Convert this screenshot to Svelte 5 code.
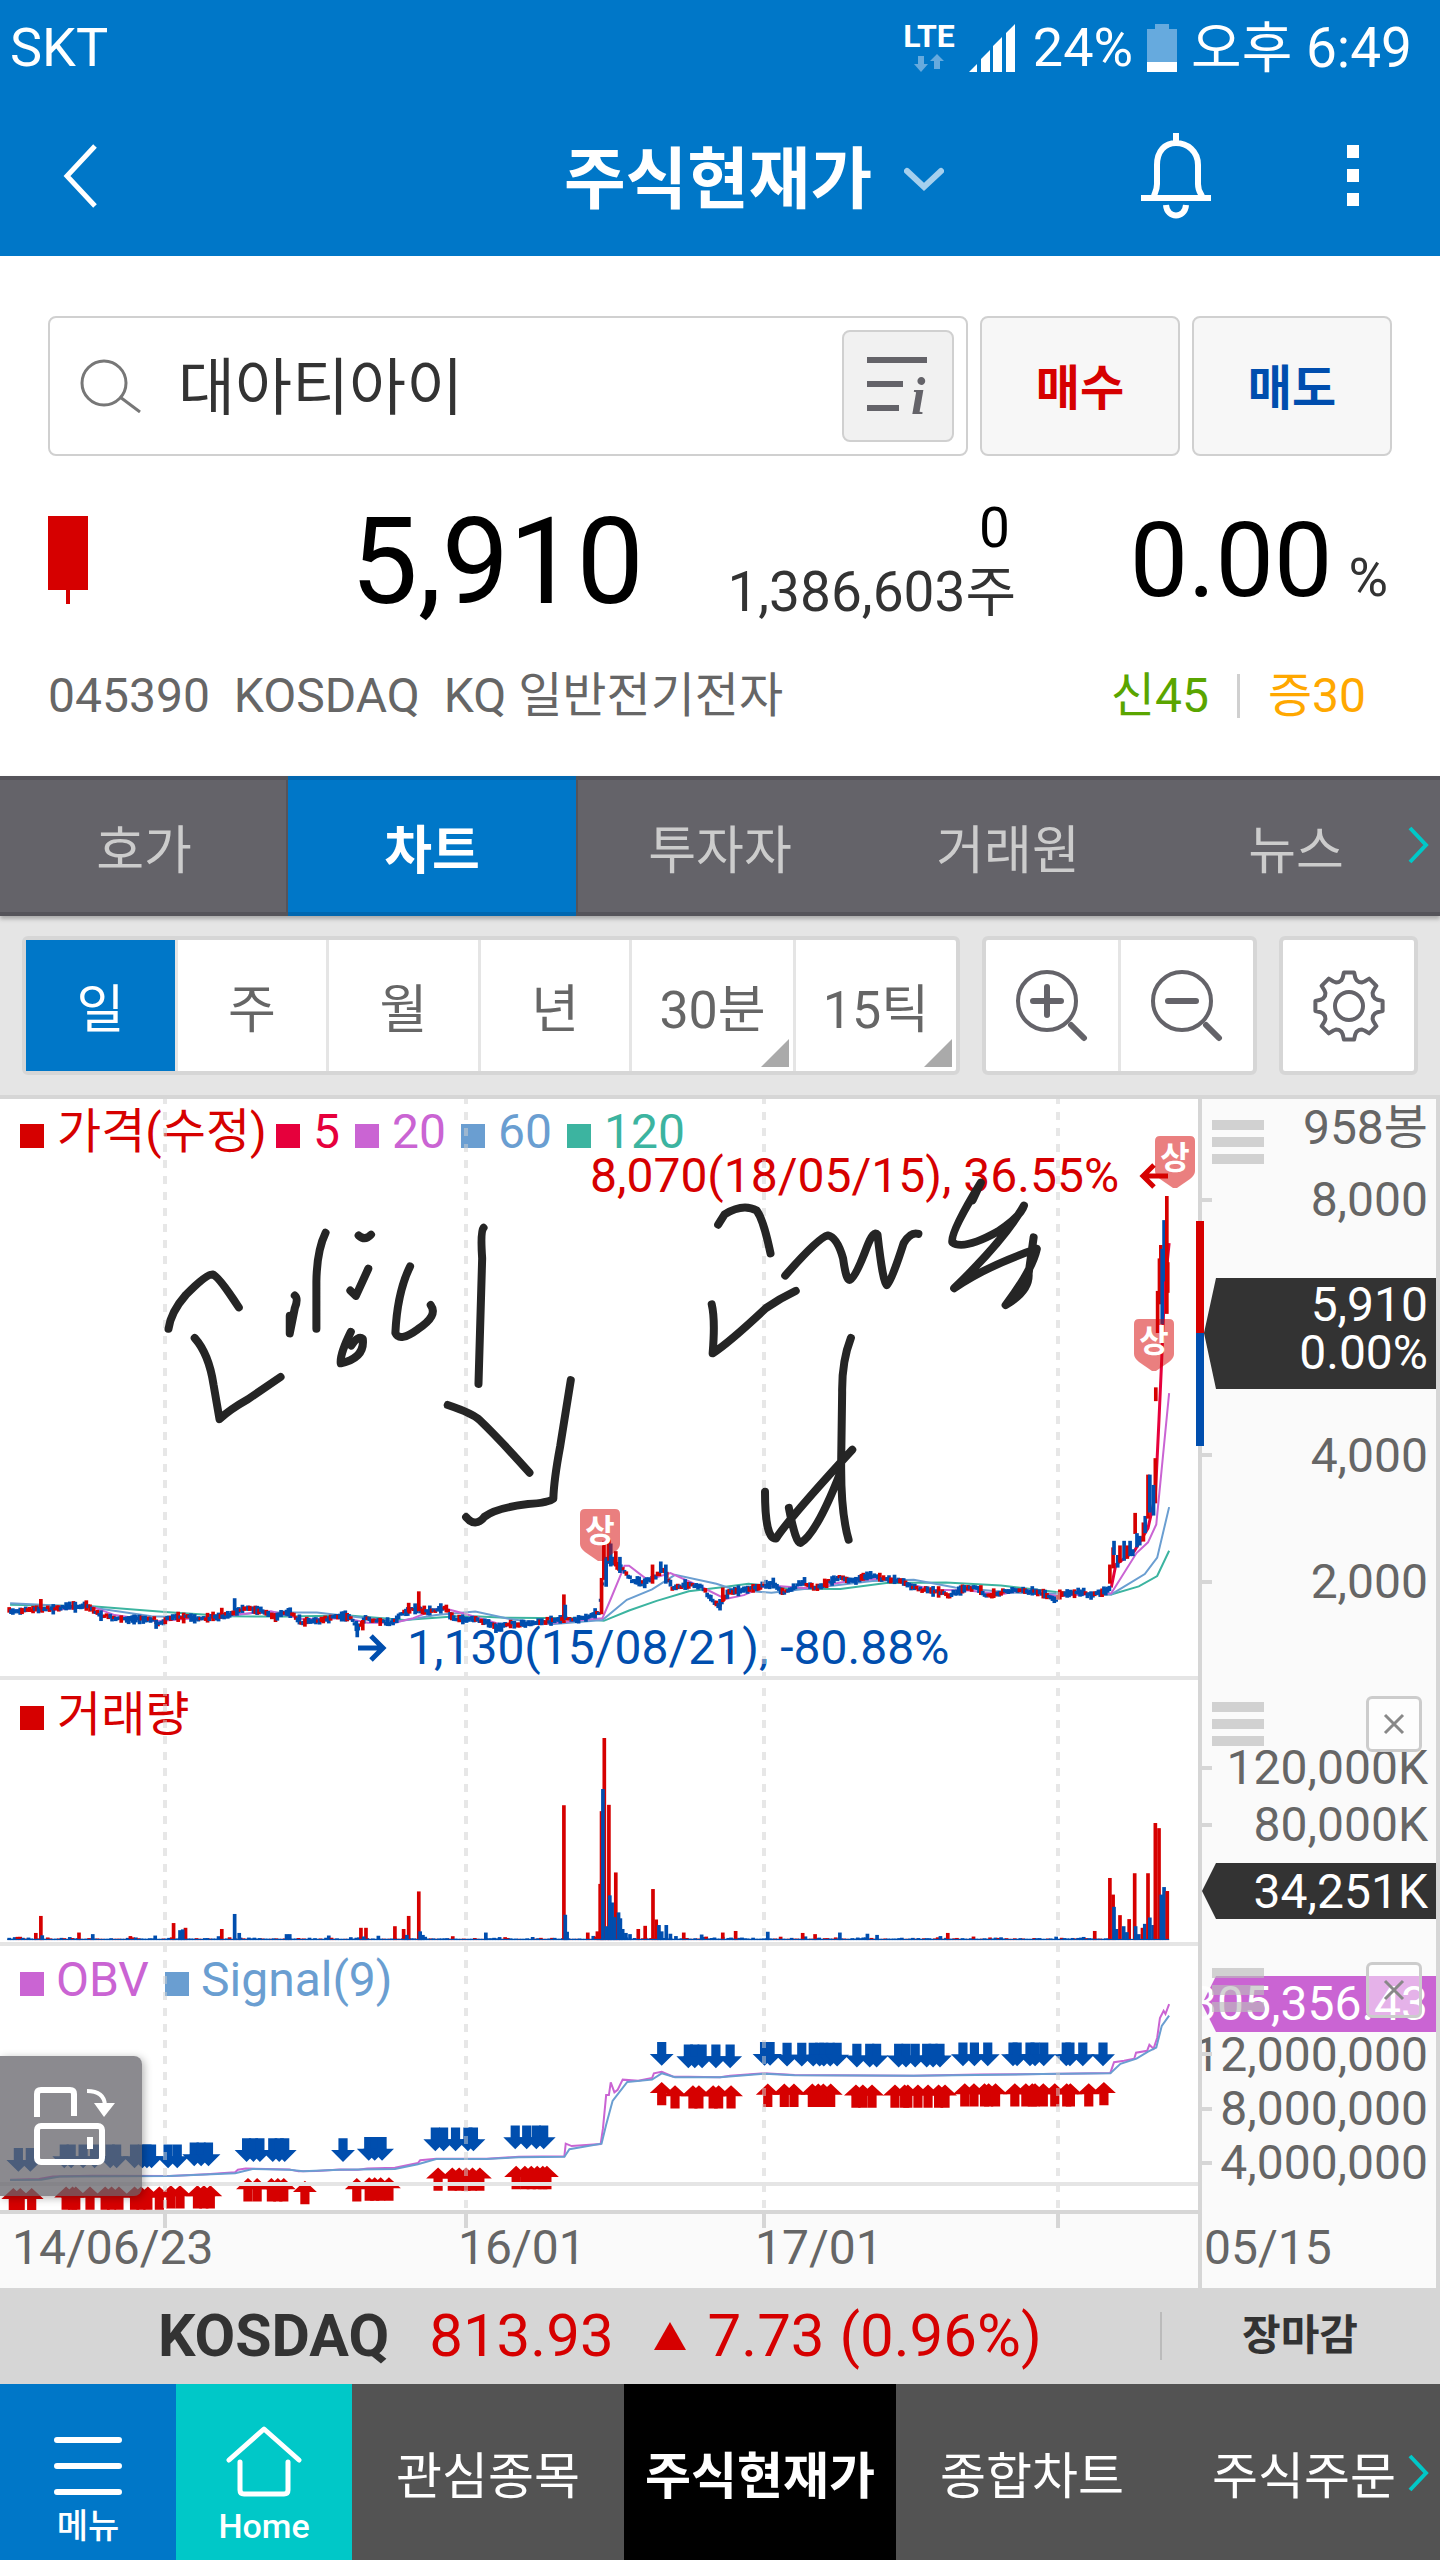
<script lang="ts">
	type Bar = [number, number, number, string];

	const R = '#d60000';
	const B = '#004eae';

	const tabs = ['호가', '차트', '투자자', '거래원', '뉴스'];
	const periods = ['일', '주', '월', '년', '30분', '15틱'];
	const menus = ['관심종목', '주식현재가', '종합차트', '주식주문'];

	let stock = $state('대아티아이');
	let tab = $state('차트');
	let period = $state('일');

	const gridX = [165, 466, 764, 1058];

	const legend = [
		{ x: 20, label: '가격(수정)', color: R },
		{ x: 276, label: '5', color: '#e6003c' },
		{ x: 355, label: '20', color: '#ca64d3' },
		{ x: 461, label: '60', color: '#6a9ed1' },
		{ x: 567, label: '120', color: '#3cb4a0' }
	];

	// daily close trend
	const trend = [
		[20, 1362], [60, 1357], [120, 1354], [190, 1346], [215, 1370], [260, 1382], [335, 1382], [345, 1394], [380, 1374],
		[440, 1382], [500, 1370], [530, 1356], [570, 1360], [600, 1376], [630, 1364], [655, 1390], [700, 1386], [740, 1375],
		[765, 1378], [780, 1408], [795, 1382], [850, 1393], [880, 1365], [905, 1354], [930, 1365], [970, 1352], [985, 1380],
		[1030, 1384], [1060, 1392], [1085, 1406], [1110, 1395], [1160, 1394], [1210, 1384], [1230, 1378], [1255, 1385],
		[1305, 1366], [1312, 1290], [1325, 1225], [1340, 1236], [1360, 1258], [1375, 1280], [1400, 1288], [1430, 1270],
		[1445, 1252], [1465, 1304], [1500, 1292], [1530, 1300], [1545, 1326], [1566, 1346], [1588, 1312], [1628, 1305],
		[1668, 1292], [1688, 1290], [1706, 1316], [1748, 1285], [1778, 1302], [1803, 1286], [1828, 1275], [1858, 1282],
		[1893, 1268], [1918, 1276], [1968, 1285], [1998, 1304], [2048, 1312], [2063, 1322], [2108, 1300], [2133, 1303],
		[2148, 1323], [2208, 1305], [2268, 1315], [2296, 1334], [2313, 1315], [2358, 1312], [2373, 1320], [2416, 1306]
	];

	let seed = 7;
	function rand() {
		seed = (seed * 16807) % 2147483647;
		return seed / 2147483647;
	}

	function at(points: number[][], x: number) {
		const i = Math.max(1, points.findIndex((p) => p[0] >= x));
		const [x0, y0] = points[i - 1];
		const [x1, y1] = points[i];
		return y0 + ((y1 - y0) * (x - x0)) / (x1 - x0);
	}

	const candles: Bar[] = [];
	for (let x = 20; x <= 2416; x += 4) {
		const y = at(trend, x) + (rand() - 0.5) * 7;
		const half = 4 + rand() * rand() * 12;
		candles.push([x, y - half, y + half, rand() > 0.38 ? B : R]);
	}

	const spikes: Bar[] = [
		[89, 1330, 1355, R], [511, 1328, 1360, B], [483, 1353, 1370, R], [912, 1310, 1362, R], [890, 1340, 1365, R],
		[778, 1395, 1430, B], [790, 1385, 1412, R], [340, 1385, 1408, B], [1228, 1318, 1378, R], [1231, 1345, 1380, B],
		[1310, 1275, 1370, R], [1315, 1178, 1280, R], [1320, 1220, 1298, B], [1326, 1175, 1230, R], [1330, 1185, 1245, B],
		[1341, 1205, 1245, R], [1350, 1220, 1262, B], [1421, 1240, 1290, R], [1439, 1232, 1262, B], [1450, 1240, 1290, B],
		[1568, 1330, 1360, B], [1574, 1300, 1338, R], [2417, 1240, 1290, R], [2424, 1195, 1250, R], [2426, 1178, 1215, B],
		[2434, 1215, 1248, B], [2439, 1190, 1235, R], [2448, 1178, 1230, B], [2455, 1190, 1225, R], [2461, 1178, 1218, B],
		[2467, 1200, 1218, B], [2472, 1105, 1160, R], [2476, 1158, 1195, B], [2482, 1165, 1190, B], [2490, 1130, 1180, R],
		[2494, 1113, 1158, B], [2500, 1005, 1120, R], [2504, 1005, 1104, B], [2516, 962, 1080, R], [2512, 1032, 1112, B],
		[2517, 777, 813, R], [2521, 525, 635, R], [2525, 440, 560, R], [2528, 405, 520, R], [2531, 415, 612, B],
		[2535, 340, 500, B], [2541, 277, 585, R], [2543, 450, 530, R]
	];

	const volumes: Bar[] = [];
	for (let x = 20; x < 2420; x += 6) {
		volumes.push([x, 680 - rand() * rand() * rand() * 12, 683, rand() > 0.35 ? B : R]);
	}
	const volumeSpikes: [number, number, string][] = [
		[78, 665, R], [89, 622, R], [92, 671, B], [172, 664, R], [202, 668, B], [378, 640, R], [404, 652, R], [392, 658, B],
		[398, 656, B], [483, 655, R], [511, 617, B], [521, 665, B], [624, 668, B], [631, 668, B], [786, 652, R], [797, 652, R],
		[792, 674, B], [860, 648, R], [879, 655, R], [890, 622, R], [886, 670, B], [912, 560, R], [915, 661, B], [921, 670, B],
		[1058, 664, B], [1228, 342, R], [1231, 619, B], [1235, 662, B], [1280, 664, R], [1301, 661, R], [1307, 541, R],
		[1310, 357, R], [1316, 172, R], [1313, 301, B], [1326, 341, R], [1321, 648, B], [1328, 570, B], [1333, 588, B],
		[1341, 512, R], [1338, 625, B], [1347, 613, B], [1351, 628, B], [1356, 655, B], [1363, 665, B], [1372, 668, B],
		[1390, 655, R], [1405, 647, R], [1422, 554, R], [1429, 631, R], [1435, 645, B], [1441, 661, B], [1451, 645, B],
		[1460, 667, B], [1489, 664, R], [1528, 669, B], [1574, 664, R], [1602, 660, R], [1672, 662, B], [1748, 665, R],
		[1775, 668, R], [1829, 664, B], [1889, 667, B], [1910, 670, B], [2064, 665, R], [2384, 660, R], [2417, 526, R],
		[2424, 568, R], [2426, 599, B], [2432, 655, B], [2439, 620, R], [2447, 648, B], [2459, 630, R], [2454, 663, B],
		[2471, 514, R], [2473, 648, B], [2480, 668, B], [2488, 652, R], [2493, 642, B], [2500, 514, R], [2504, 626, B],
		[2511, 645, B], [2516, 387, R], [2524, 400, R], [2529, 568, B], [2535, 549, B], [2542, 559, R]
	];

	// [top, x positions]
	const sells: [number, number[]][] = [
		[1209, [40, 66]],
		[1200, [140, 155, 181, 206, 240, 254, 293, 310, 320, 330, 366, 386]],
		[1195, [423, 438, 454]],
		[1184, [537, 552, 566, 594, 608, 620, 747]],
		[1181, [803, 816, 832]],
		[1157, [948, 966, 992, 1019, 1031]],
		[1152, [1122, 1147, 1168, 1184]],
		[941, [1441, 1665, 1677]],
		[947, [1499, 1513, 1529, 1559, 1590]],
		[943, [1714, 1746, 1771, 1785, 1794, 1808, 1823]],
		[945, [1866, 1894, 1909, 1957, 1973, 1993, 2018, 2032, 2047]],
		[942, [2097, 2122, 2151, 2206, 2215, 2243, 2254, 2273, 2322, 2330, 2358, 2402]]
	];
	const buys: [number, number[]][] = [
		[1310, [29, 44, 69]],
		[1306, [144, 158, 165, 196, 229, 243, 259, 293, 307, 322, 347]],
		[1303, [372, 392, 430, 444, 458]],
		[1285, [540, 560, 591, 605, 618, 777]],
		[1292, [664]],
		[1283, [804, 816, 829, 847]],
		[1258, [954, 985, 1000, 1015, 1029, 1045]],
		[1254, [1124, 1143, 1157, 1170, 1182, 1191]],
		[1042, [1441, 2404]],
		[1050, [1470, 1509, 1522, 1553, 1565, 1592]],
		[1046, [1672, 1708, 1729, 1769, 1782, 1793, 1809]],
		[1048, [1864, 1879, 1899, 1949, 1970, 1977, 1999, 2021, 2044, 2058]],
		[1045, [2101, 2121, 2144, 2153, 2168, 2210, 2234, 2248, 2254, 2272, 2297, 2323, 2331, 2371]]
	];

	const axis = [
		{ y: 45, label: '958봉' },
		{ y: 117, label: '8,000', tick: 101 },
		{ y: 373, label: '4,000', tick: 356 },
		{ y: 499, label: '2,000', tick: 483 },
		{ y: 685, label: '120,000K', tick: 669 },
		{ y: 742, label: '80,000K', tick: 726 },
		{ y: 972, label: '12,000,000', tick: 955 },
		{ y: 1026, label: '8,000,000', tick: 1010 },
		{ y: 1080, label: '4,000,000', tick: 1064 }
	];
	const dates = [
		{ x: 12, label: '14/06/23' },
		{ x: 458, label: '16/01' },
		{ x: 755, label: '17/01' },
		{ x: 1204, label: '05/15' }
	];
	const limits = [[580, 410], [1155, 37], [1134, 220]];
	const handles = [21, 603, 869];

	// outline of the settings cog, eight teeth
	const cog: string[] = [];
	for (let i = 0; i < 8; i++) {
		for (const [turn, r] of [[-0.28, 27], [-0.22, 29], [-0.15, 34], [0.15, 34], [0.22, 29], [0.28, 27], [0.39, 26]]) {
			const a = (i * Math.PI) / 4 + turn;
			cog.push(`${(37 + r * Math.sin(a)).toFixed(1)},${(37 - r * Math.cos(a)).toFixed(1)}`);
		}
	}
</script>

<header>
	<div class="status">
		<span>SKT</span>
		<div class="signals">
			<span class="lte">
				<b>LTE</b>
				<svg width="30" height="18" viewBox="0 0 30 18"><path fill="#66aade" d="M4 2h6v8h4l-7 8-7-8h4zM20 15h6V7h4l-7-7-7 7h4z" /></svg>
			</span>
			<svg width="50" height="48" viewBox="0 0 50 48"><path fill="#fff" d="M0 48l8-8v8zM12 48V35l9-9v22zM24 48V22l9-9v35zM37 48V9l9-9v48z" /></svg>
			<span>24%</span>
			<svg width="30" height="48" viewBox="0 0 30 48"><path fill="#66aade" d="M8 0h14v5h8v33H0V5h8z" /><path fill="#fff" d="M0 38h30v10H0z" /></svg>
			<span class="clock">오후 6:49</span>
		</div>
	</div>
	<div class="title">
		<button aria-label="뒤로">
			<svg width="40" height="66" viewBox="0 0 40 66"><path d="M35 3 7 33l28 30" fill="none" stroke="#fff" stroke-width="5" /></svg>
		</button>
		<h1>주식현재가
			<svg width="40" height="26" viewBox="0 0 40 26"><path d="m3 4 17 16L37 4" fill="none" stroke="#a6d0ee" stroke-width="6" stroke-linecap="round" /></svg>
		</h1>
		<button class="bell" aria-label="알림">
			<svg width="72" height="86" viewBox="0 0 72 86" fill="none" stroke="#fff" stroke-width="6"><path d="M36 0v9M14 63c0-2 3-5 3-12V32C17 18 25 10 36 10s22 8 22 22v19c0 7 3 10 4 12M26 72c1 14 19 14 20 0" /><path d="M1 65h70" /></svg>
		</button>
		<button class="more" aria-label="더보기">
			<svg width="14" height="62" viewBox="0 0 14 62"><path fill="#fff" d="M1 0h12v13H1zM1 24h12v13H1zM1 48h12v13H1z" /></svg>
		</button>
	</div>
</header>

<section class="quote">
	<div class="search">
		<div class="field">
			<svg width="62" height="54" viewBox="0 0 62 54" fill="none" stroke="#777" stroke-width="3"><circle cx="24" cy="24" r="22" /><path d="m40 38 20 15" /></svg>
			<input type="text" aria-label="종목" bind:value={stock} />
			<button aria-label="종목정보">
				<svg width="66" height="64" viewBox="0 0 66 64"><path stroke="#646369" stroke-width="6" d="M2 6h60M2 30h36M2 54h32" /><text x="46" y="60" font-family="Liberation Serif, serif" font-size="52" font-style="italic" font-weight="bold" fill="#646369">i</text></svg>
			</button>
		</div>
		<button class="trade buy">매수</button>
		<button class="trade sell">매도</button>
	</div>
	<div class="price">
		<svg width="40" height="88" viewBox="0 0 40 88"><path fill="#d60000" d="M0 0h40v74H22v14h-4V74H0z" /></svg>
		<strong>5,910</strong>
		<div class="change"><span>0</span><span class="vol">1,386,603주</span></div>
		<div class="rate">0.00<small>%</small></div>
	</div>
	<div class="info">
		<span>045390</span><span>KOSDAQ</span><span>KQ 일반전기전자</span>
		<span class="credit">신45</span><i></i><span class="margin">증30</span>
	</div>
</section>

<nav class="tabs">
	{#each tabs as t}
		<button class:on={tab === t} onclick={() => (tab = t)}>{t}</button>
	{/each}
	<svg class="next" width="22" height="38" viewBox="0 0 22 38"><path d="m2 2 16 17L2 36" fill="none" stroke="#00c8c8" stroke-width="4" /></svg>
</nav>

<div class="toolbar">
	<div class="group periods">
		{#each periods as p, i}
			<button class:on={period === p} class:drop={i > 3} onclick={() => (period = p)}>{p}</button>
		{/each}
	</div>
	<div class="group zoom">
		<button aria-label="확대">
			<svg width="74" height="74" viewBox="0 0 74 74" fill="none" stroke="#646369" stroke-width="4" stroke-linecap="round"><circle cx="32" cy="32" r="29" /><path stroke-width="6" d="M18 32h28M32 18v28M56 56l13 13" /></svg>
		</button>
		<button aria-label="축소">
			<svg width="74" height="74" viewBox="0 0 74 74" fill="none" stroke="#646369" stroke-width="4" stroke-linecap="round"><circle cx="32" cy="32" r="29" /><path stroke-width="6" d="M18 32h28M56 56l13 13" /></svg>
		</button>
	</div>
	<div class="group gear">
		<button aria-label="설정">
			<svg width="74" height="74" viewBox="0 0 74 74" fill="none" stroke="#646369" stroke-width="4" stroke-linejoin="round"><circle cx="37" cy="37" r="14" /><polygon points={cog.join(' ')} /></svg>
		</button>
	</div>
</div>

<main>
	<svg class="chart" viewBox="0 0 1440 1189">
		<rect x="1198" width="242" height="1189" fill="#fafafa" />
		<rect y="1115" width="1198" height="74" fill="#fafafa" />
		<g font-size="48">
			{#each legend as l}
				<rect x={l.x} y="25" width="24" height="24" fill={l.color} />
				<text x={l.x + 37} y="49" fill={l.color}>{l.label}</text>
			{/each}
			<rect x="20" y="607" width="24" height="24" fill={R} />
			<text x="57" y="632" fill={R}>거래량</text>
			<rect x="20" y="873" width="24" height="24" fill="#ca64d3" />
			<text x="56" y="897" fill="#ca64d3">OBV</text>
			<rect x="165" y="873" width="24" height="24" fill="#6a9ed1" />
			<text x="201" y="897" fill="#6a9ed1">Signal(9)</text>
			<text x="590" y="93" fill={R}>8,070(18/05/15), 36.55%</text>
			<text x="407" y="565" fill={B}>1,130(15/08/21), -80.88%</text>
		</g>

		<path d="M1168 77h-24m10-11-11 11 11 11" fill="none" stroke={R} stroke-width="5" />
		<path d="M358 549h24m-11-12 12 12-12 12" fill="none" stroke={B} stroke-width="5" />

		<!-- price -->
		<g transform="translate(0 -9) scale(.4592 .3827)">
			<g class="line" stroke-width="2">
				<path stroke="#3cb4a0" d="M22 1345L200 1349 360 1364 500 1375 620 1376 760 1373 880 1385 1010 1374 1100 1379 1250 1380 1315 1387 1370 1360 1430 1335 1500 1310 1568 1300 1630 1290 1720 1303 1830 1304 1930 1288 2060 1287 2180 1295 2300 1312 2420 1318 2480 1297 2520 1270 2546 1204" />
				<path stroke="#6a9ed1" d="M22 1341L90 1345 200 1352 330 1375 470 1380 560 1365 690 1365 780 1378 870 1388 950 1372 1035 1363 1110 1382 1200 1396 1312 1385 1365 1332 1420 1305 1470 1267 1560 1290 1600 1306 1680 1314 1780 1300 1900 1283 1990 1280 2080 1300 2200 1313 2300 1316 2420 1318 2493 1265 2520 1222 2546 1090" />
				<path stroke="#ca64d3" d="M22 1360L120 1358 200 1350 250 1372 340 1388 430 1380 520 1370 590 1362 660 1383 750 1380 800 1392 860 1392 900 1380 960 1352 1010 1368 1100 1400 1200 1393 1312 1380 1330 1330 1360 1243 1370 1243 1410 1280 1460 1262 1530 1300 1580 1330 1620 1320 1670 1294 1760 1302 1840 1285 1930 1275 2030 1306 2110 1308 2180 1318 2230 1305 2300 1322 2420 1315 2475 1210 2500 1182 2518 1135 2546 792" />
				<path stroke="#e6003c" stroke-width="3" d="M2420 1300L2430 1240 2470 1205 2500 1145 2516 1060 2524 860 2530 700 2536 520 2546 400" />
			</g>
			{#each [...candles, ...spikes] as [x, top, bottom, fill]}
				<rect x={x - 4} y={top} width="8" height={bottom - top} {fill} />
			{/each}
		</g>

		{#each limits as [x, y]}
			<path transform="translate({x} {y})" d="M5 0h30q5 0 5 5v30q0 4-5 8L22 52h-4L5 43q-5-4-5-8V5q0-5 5-5z" fill={R} fill-opacity=".5" />
			<text x={x + 20} y={y + 33} fill="#fff" font-size="32" font-weight="bold" text-anchor="middle">상</text>
		{/each}

		<!-- volume and OBV -->
		<g transform="translate(0 571) scale(.4592 .3954)">
			{#each volumes as [x, top, bottom, fill]}
				<rect x={x - 4} y={top} width="8" height={bottom - top} {fill} />
			{/each}
			{#each volumeSpikes as [x, top, fill]}
				<rect x={x - 4} y={top} width="8" height={683 - top} {fill} />
			{/each}
			<rect x="16" y="680" width="2530" height="3" fill={B} />
			{#each sells as [top, xs]}
				{#each xs as x}
					<path fill={B} d="M{x - 10} {top}h20v30h16l-26 30-26-30h16z" />
				{/each}
			{/each}
			{#each buys as [top, xs]}
				{#each xs as x}
					<path fill={R} d="M{x} {top}l26 28h-16v31h-20v-31h-16z" />
				{/each}
			{/each}
			<g class="line" stroke-width="2">
				<path stroke="#ca64d3" d="M22 1289L85 1287 115 1281 200 1279 370 1280 450 1275 512 1270 518 1264 535 1261 630 1263 650 1268 690 1267 740 1263 780 1264 800 1261 860 1259 910 1247 915 1240 950 1236 1060 1236 1130 1231 1229 1230 1232 1198 1245 1204 1308 1199 1313 1160 1320 1075 1326 1075 1330 1043 1338 1068 1345 1062 1356 1036 1390 1039 1420 1032 1424 1020 1441 1016 1465 1028 1568 1030 1590 1026 1665 1020 1730 1024 1990 1026 2130 1023 2270 1022 2418 1019 2426 992 2448 988 2470 983 2474 968 2498 963 2503 948 2512 958 2520 930 2526 880 2534 862 2538 870 2546 845" />
				<path stroke="#6a9ed1" d="M22 1290L90 1289 130 1281 370 1280 512 1273 550 1262 630 1264 660 1268 740 1264 860 1262 910 1250 950 1237 1060 1237 1130 1232 1229 1231 1240 1212 1310 1198 1320 1150 1334 1090 1366 1042 1420 1036 1441 1020 1470 1030 1568 1030 1665 1021 1730 1025 1990 1026 2270 1022 2418 1020 2440 996 2475 983 2500 965 2518 955 2530 900 2546 874" />
			</g>
		</g>

		{#each gridX as x}
			<path d="M{x} 0V1111" stroke="#d0d0d0" stroke-opacity=".5" stroke-width="4" stroke-dasharray="8 8" stroke-dashoffset="3" />
			<path d="M{x} 1115v14" stroke="#d6d6d6" stroke-width="4" />
		{/each}
		<path d="M0 579h1198M0 845h1198M0 1085h1198" stroke="#e5e5e5" stroke-width="4" />
		<path d="M0 1113h1198M1200 0v1189M1438 0v1189" stroke="#d6d6d6" stroke-width="4" />

		<path d="M1196 122h8v112h-8z" fill={R} />
		<path d="M1196 234h8v113h-8z" fill={B} />
		<path d="M1204 234l12-55h220v111h-220zM1202 792l14-28h220v56h-220z" fill="#333" />
		<path d="M1202 905l14-28h220v56h-220z" fill="#ca64d3" />

		<svg x="1202" y="0" width="234" height="1189" font-size="48" text-anchor="end">
			{#each axis as a}
				<text x="226" y={a.y} fill="#666">{a.label}</text>
				{#if a.tick}<path d="M0 {a.tick}h10" stroke="#d6d6d6" stroke-width="4" />{/if}
			{/each}
			<g fill="#fff">
				<text x="226" y="222">5,910</text>
				<text x="226" y="270">0.00%</text>
				<text x="226" y="809">34,251K</text>
				<text x="226" y="921">305,356.43</text>
			</g>
		</svg>
		{#each handles as y}
			<path transform="translate(1212 {y})" d="M0 0h52v10H0zM0 17h52v10H0zM0 34h52v10H0z" fill="#bbb" fill-opacity=".65" />
		{/each}
		{#each dates as d}
			<text x={d.x} y="1165" font-size="48" fill="#666">{d.label}</text>
		{/each}

		<!-- pen notes -->
		<g class="line ink" transform="translate(0 -9) scale(.4592 .3827)">
			<path d="M367 624Q372 580 405 535 450 480 463 482 475 485 520 568M424 648Q455 690 465 770L478 860Q500 835 540 808L611 750" />
			<path d="M642 537Q650 545 642 570L631 636V590M709 373Q690 420 689 500V624M781 380Q795 395 808 378M802 467L775 538 763 524" />
			<path d="M893 461Q865 530 861 635 870 660 910 625 955 590 938 562M764 632Q740 690 742 714 795 700 790 650 780 640 765 668" />
			<path d="M1053 360Q1046 370 1050 440L1042 768M975 823Q1030 845 1045 863 1090 915 1153 1000M1243 758L1220 930Q1206 1020 1205 1068 1195 1078 1150 1082 1080 1092 1055 1115 1035 1145 1015 1116" />
		</g>
		<g class="line ink" transform="translate(720 -9) scale(.4592 .3827)">
			<path d="M-4 352L10 325Q50 295 80 315 95 340 110 427M-18 560Q-10 600-16 688 20 660 100 570 130 545 165 525" />
			<path d="M142 485Q215 385 235 380 255 385 268 440 275 500 283 496 295 490 320 410 335 365 343 378 355 505 363 510 372 505 400 400 415 370 432 376" />
			<path d="M550 288L568 242Q500 375 506 398 530 420 605 370 655 330 662 302 620 390 510 518 580 460 690 415 680 470 622 562 675 525 672 480L683 385" />
			<path d="M285 648Q265 710 266 790L264 960Q262 1100 280 1175M98 1050Q98 1175 122 1172 150 1120 288 940M150 1092Q165 1185 175 1184 210 1160 262 1000" />
		</g>
	</svg>

	<button class="close volume" aria-label="거래량 닫기"><svg width="22" height="22" viewBox="0 0 22 22"><path d="m2 2 18 18M20 2 2 20" stroke="#888" stroke-width="3" /></svg></button>
	<button class="close obv" aria-label="OBV 닫기"><svg width="22" height="22" viewBox="0 0 22 22"><path d="m2 2 18 18M20 2 2 20" stroke="#888" stroke-width="3" /></svg></button>
	<button class="rotate" aria-label="가로보기">
		<svg width="82" height="78" viewBox="0 0 82 78" fill="none" stroke="#fff" stroke-width="6"><path d="M3 30V7q0-4 4-4h29q4 0 4 4v22" /><rect x="3" y="39" width="65" height="36" rx="4" /><path d="M56 50v12" /><path stroke-width="4" d="M53 4q17 0 18 14" /><path fill="#fff" stroke="none" d="M60 16h21L70 30z" /></svg>
	</button>
</main>

<div class="index">
	<b>KOSDAQ</b>
	<span>813.93</span>
	<svg width="32" height="28" viewBox="0 0 32 28"><path fill="#d60000" d="m16 0 16 28H0z" /></svg>
	<span>7.73 (0.96%)</span>
	<em>장마감</em>
</div>

<nav class="bottom">
	<button class="icon menu">
		<svg width="68" height="62" viewBox="0 0 68 62"><path stroke="#fff" stroke-width="6" stroke-linecap="round" d="M3 4h62M3 30h62M3 56h62" /></svg>
		메뉴
	</button>
	<button class="icon home">
		<svg width="76" height="72" viewBox="0 0 76 72" fill="none" stroke="#fff" stroke-width="5" stroke-linecap="round" stroke-linejoin="round"><path d="M3 34 38 3l35 31M14 36v28q0 4 4 4h40q4 0 4-4V36" /></svg>
		Home
	</button>
	{#each menus as m}
		<button class:on={m === '주식현재가'}>{m}</button>
	{/each}
	<svg class="next" width="22" height="38" viewBox="0 0 22 38"><path d="m2 2 16 17L2 36" fill="none" stroke="#00c8c8" stroke-width="4" /></svg>
</nav>

<style>
	:global(body) {
		font-family: Roboto, 'Noto Sans CJK KR', sans-serif;
		background: #fff;
	}
	button {
		font: inherit;
		color: inherit;
		background: none;
		border: 0;
		padding: 0;
		display: flex;
		align-items: center;
		justify-content: center;
	}
	svg {
		display: block;
		flex: none;
	}
	header {
		background: #0077c8;
		color: #fff;
	}
	.status {
		display: flex;
		justify-content: space-between;
		align-items: center;
		height: 96px;
		padding: 0 28px 0 10px;
		font-size: 54px;
		line-height: 96px;
	}
	.signals {
		display: flex;
		align-items: center;
		gap: 14px;
	}
	.clock {
		font-size: 55px;
	}
	.lte {
		display: flex;
		flex-direction: column;
		align-items: center;
		gap: 6px;
		font-size: 32px;
		line-height: 24px;
	}
	.title {
		display: flex;
		align-items: center;
		height: 160px;
		padding: 0 80px 0 60px;
	}
	h1 {
		flex: 1;
		display: flex;
		align-items: center;
		justify-content: center;
		gap: 32px;
		margin: 0;
		padding: 8px 0 0 268px;
		font-size: 67px;
		line-height: 80px;
	}
	.bell {
		margin: 0 134px 0 0;
	}
	.title button {
		height: 128px;
	}
	.quote {
		padding: 60px 48px 0;
		height: 520px;
		box-sizing: border-box;
	}
	.search {
		display: flex;
		gap: 12px;
		height: 140px;
	}
	.field {
		flex: 1;
		display: flex;
		align-items: center;
		min-width: 0;
		padding: 0 12px 0 30px;
		border: 2px solid #d0d0d0;
		border-radius: 8px;
	}
	input {
		flex: 1;
		min-width: 0;
		margin-left: 36px;
		padding: 6px 0 0;
		border: 0;
		outline: 0;
		font: inherit;
		font-size: 62px;
		line-height: 96px;
		color: #333;
	}
	.field button {
		width: 112px;
		height: 112px;
		box-sizing: border-box;
		border: 2px solid #d0d0d0;
		border-radius: 8px;
		background: #f1f1f1;
	}
	.field button svg {
		overflow: visible;
	}
	.trade {
		width: 200px;
		border: 2px solid #d0d0d0;
		border-radius: 8px;
		padding-bottom: 4px;
		background: #f7f7f7;
		font-size: 48px;
		font-weight: bold;
	}
	.buy {
		color: #d60000;
	}
	.sell {
		color: #004eae;
	}
	.price {
		display: flex;
		align-items: center;
		height: 136px;
		margin-top: 38px;
	}
	.price svg {
		margin-bottom: 4px;
	}
	strong {
		flex: 1;
		font-weight: normal;
		font-size: 120px;
		line-height: 120px;
		text-align: right;
	}
	.change {
		display: flex;
		flex-direction: column;
		align-items: flex-end;
		width: 372px;
		padding-bottom: 4px;
		font-size: 55px;
		line-height: 64px;
	}
	.change span:first-child {
		padding-right: 6px;
	}
	.vol,
	small {
		color: #333;
	}
	.rate {
		width: 372px;
		padding: 14px 4px 0 0;
		font-size: 104px;
		line-height: 120px;
		text-align: right;
	}
	small {
		margin-left: 16px;
		font-size: 54px;
	}
	.info {
		display: flex;
		align-items: center;
		gap: 24px;
		margin-top: 34px;
		font-size: 48px;
		line-height: 64px;
		color: #666;
	}
	.credit {
		margin-left: auto;
		color: #5aa500;
	}
	.info i {
		width: 3px;
		height: 44px;
		margin: 0 4px;
		background: #d0d0d0;
	}
	.margin {
		padding-right: 26px;
		color: #ffa800;
	}
	.tabs {
		position: relative;
		z-index: 1;
		display: flex;
		height: 140px;
		background: #646369;
		box-shadow: 0 3px 4px #aaa;
	}
	.tabs button {
		flex: 1;
		border: solid #55545a;
		border-width: 4px 0;
		font-size: 52px;
		color: #ccc;
	}
	.tabs .on {
		background: #0077c8;
		border-color: #0067b0;
		box-shadow: -2px 0 #55545a, 2px 0 #55545a;
		color: #fff;
		font-weight: bold;
	}
	.next {
		position: absolute;
		right: 10px;
		top: 50px;
	}
	.toolbar {
		display: flex;
		gap: 22px;
		padding: 20px 22px;
		background: #e5e5e5;
		border-bottom: 4px solid #d6d6d6;
	}
	.group {
		display: flex;
		height: 139px;
		box-sizing: border-box;
		border: 4px solid #d6d6d6;
		border-radius: 6px;
		background: #fff;
	}
	.periods {
		flex: 1;
	}
	.group button {
		position: relative;
		flex: 152;
		font-size: 52px;
		color: #666;
	}
	.group button + button {
		border-left: 3px solid #e5e5e5;
	}
	.group .drop {
		flex: 164;
	}
	.group .on {
		background: #0077c8;
		color: #fff;
	}
	.drop::after {
		content: '';
		position: absolute;
		right: 4px;
		bottom: 4px;
		border: 14px solid #aaa;
		border-top-color: transparent;
		border-left-color: transparent;
	}
	.zoom {
		width: 275px;
	}
	.gear {
		width: 139px;
	}
	main {
		position: relative;
		background: #fff;
	}
	.chart {
		width: 100%;
		height: auto;
	}
	.line {
		fill: none;
	}
	.line path {
		vector-effect: non-scaling-stroke;
	}
	.ink {
		stroke: #252525;
		stroke-width: 8px;
		stroke-linecap: round;
		stroke-linejoin: round;
	}
	.close {
		position: absolute;
		right: 18px;
		width: 56px;
		height: 56px;
		border: 3px solid #ccc;
		border-radius: 6px;
		background: rgba(255, 255, 255, 0.5);
	}
	.volume {
		top: 50.2%;
	}
	.obv {
		top: 72.6%;
	}
	.rotate {
		position: absolute;
		left: 0;
		top: 80.5%;
		width: 142px;
		height: 140px;
		padding-left: 8px;
		border-radius: 0 8px 8px 0;
		background: rgba(100, 99, 105, 0.75);
		box-shadow: 2px 2px 8px rgba(0, 0, 0, 0.3);
	}
	.index {
		display: flex;
		align-items: center;
		height: 96px;
		padding: 0 82px 0 158px;
		background: #d6d6d6;
		font-size: 60px;
		line-height: 96px;
		color: #d60000;
	}
	.index b {
		margin-right: 40px;
		font-size: 59px;
		color: #333;
	}
	.index svg {
		margin: 0 22px 0 40px;
	}
	em {
		margin-left: auto;
		padding-left: 80px;
		border-left: 2px solid #bbb;
		font-size: 42px;
		font-style: normal;
		font-weight: bold;
		line-height: 48px;
		color: #333;
	}
	.bottom {
		position: relative;
		display: flex;
		height: 176px;
		background: #535353;
		color: #fff;
		font-size: 50px;
	}
	.bottom button {
		flex: 1;
	}
	.bottom .on {
		background: #000;
		font-weight: bold;
	}
	.bottom .icon {
		flex: none;
		flex-direction: column;
		justify-content: flex-end;
		gap: 8px;
		width: 176px;
		padding-bottom: 14px;
		font-size: 34px;
		font-weight: 500;
		line-height: 40px;
	}
	.menu {
		background: #0077c8;
	}
	.home {
		background: #00c8c8;
	}
	.bottom .next {
		top: 70px;
	}
</style>
